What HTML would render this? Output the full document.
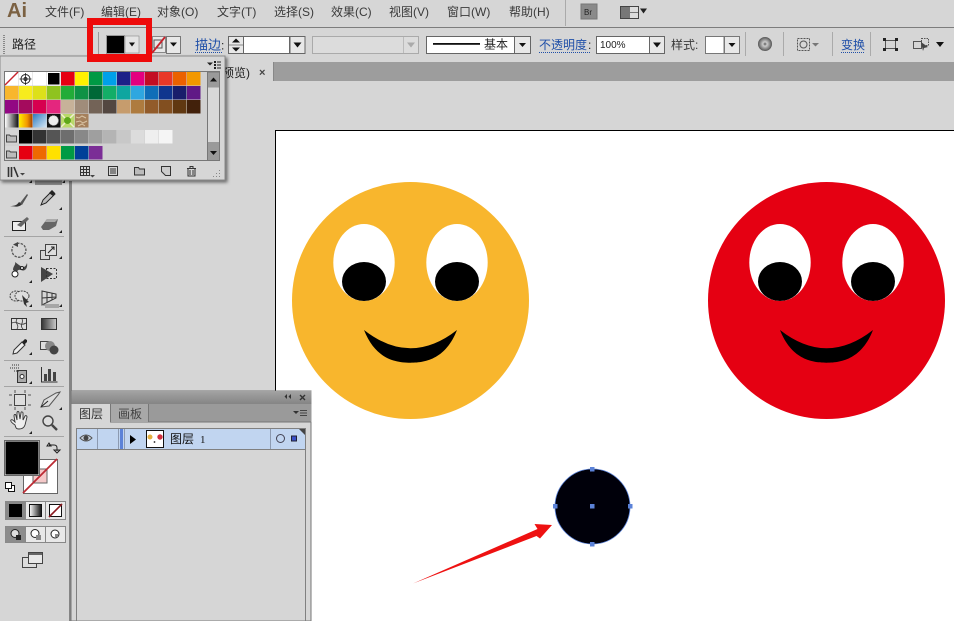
<!DOCTYPE html>
<html><head><meta charset="utf-8"><title>Illustrator</title>
<style>
html,body{margin:0;padding:0;background:#d6d6d6;width:954px;height:621px;overflow:hidden}
svg{display:block;filter:blur(.3px)}
text{font-family:"Liberation Sans","Noto Sans CJK SC",sans-serif;}
.m{font-size:12px;fill:#3a3a3a}
.b{font-size:12px;fill:#1f4fa8}
.k{font-size:12px;fill:#222}
.i{fill:none;stroke:#333;stroke-width:1.2}
.f{fill:#333}
</style></head><body>
<svg width="954" height="621" viewBox="0 0 954 621" xmlns="http://www.w3.org/2000/svg">
<defs>
<linearGradient id="g1" x1="0" x2="1" y1="0" y2="0"><stop offset="0" stop-color="#fff"/><stop offset="1" stop-color="#111"/></linearGradient>
<linearGradient id="g2" x1="0" x2="1" y1="0" y2="0"><stop offset="0" stop-color="#fff100"/><stop offset=".6" stop-color="#f39800"/><stop offset="1" stop-color="#a04000"/></linearGradient>
<linearGradient id="g3" x1="0" x2="1" y1="0" y2="1"><stop offset="0" stop-color="#2e7cc0"/><stop offset="1" stop-color="#d8e8f4"/></linearGradient>
<linearGradient id="g4" x1="0" x2="1" y1="0" y2="0"><stop offset="0" stop-color="#333"/><stop offset="1" stop-color="#ccc"/></linearGradient>
<linearGradient id="g5" x1="0" x2="0" y1="0" y2="1"><stop offset="0" stop-color="#a3a3a3"/><stop offset="1" stop-color="#858585"/></linearGradient>
<radialGradient id="g6"><stop offset="0" stop-color="#555"/><stop offset=".3" stop-color="#ccc"/><stop offset=".7" stop-color="#888"/><stop offset="1" stop-color="#555"/></radialGradient>
<filter id="sh" x="-5%" y="-5%" width="112%" height="115%"><feDropShadow dx="2" dy="2" stdDeviation="1.500" flood-color="#000" flood-opacity=".5"/></filter>
</defs>
<rect width="954" height="621" fill="#d6d6d6"/>

<!-- canvas -->
<rect x="275.500" y="130.500" width="690" height="500" fill="#fff" stroke="#000"/>

<!-- orange face -->
<circle cx="410.500" cy="300.500" r="118.500" fill="#f8b62d"/>
<ellipse cx="364" cy="262.500" rx="30.700" ry="38.500" fill="#fff"/>
<ellipse cx="457" cy="262.500" rx="30.700" ry="38.500" fill="#fff"/>
<ellipse cx="364" cy="281.500" rx="22" ry="19.500"/>
<ellipse cx="457" cy="281.500" rx="22" ry="19.500"/>
<path d="M364 330Q410.500 366.500 457 330C446 358 427 362.700 410.500 362.700C394 362.700 375 358 364 330Z"/>
<!-- red face -->
<circle cx="826.500" cy="300.500" r="118.500" fill="#e50012"/>
<ellipse cx="780" cy="262.500" rx="30.700" ry="38.500" fill="#fff"/>
<ellipse cx="873" cy="262.500" rx="30.700" ry="38.500" fill="#fff"/>
<ellipse cx="780" cy="281.500" rx="22" ry="19.500"/>
<ellipse cx="873" cy="281.500" rx="22" ry="19.500"/>
<path d="M780 330Q826.500 366.500 873 330C862 358 843 362.700 826.500 362.700C810 362.700 791 358 780 330Z"/>
<!-- selected circle -->
<circle cx="592.500" cy="506.500" r="37.500" fill="#00000a" stroke="#5b82d8" stroke-width=".8"/>
<g fill="#5b82d8"><rect x="590" y="504" width="4.500" height="4.500"/><rect x="590" y="467" width="4.500" height="4.500"/><rect x="590" y="542" width="4.500" height="4.500"/><rect x="553" y="504" width="4.500" height="4.500"/><rect x="628" y="504" width="4.500" height="4.500"/></g>
<!-- arrow -->
<path d="M413 583.500L537.500 529L534.500 524L552 525L540 538.500L536.500 536Z" fill="#ee1111"/>

<!-- tab strip -->
<rect x="226" y="62" width="728" height="19" fill="#9d9d9d"/>
<rect x="226" y="62" width="47" height="19" fill="#d6d6d6"/>
<line x1="273.500" y1="62" x2="273.500" y2="81" stroke="#888"/>
<text class="k" x="222" y="77" fill="#444">预览)</text>
<text x="259" y="76" style="font-size:11px;font-weight:bold;fill:#444">×</text>

<!-- menu -->
<rect x="0" y="0" width="954" height="27" fill="#d6d6d6"/>
<rect x="0" y="27" width="954" height="1" fill="#7d7d7d"/>
<text x="7" y="17" style="font-size:20px;font-weight:bold;fill:#7b6142">Ai</text>
<text class="m" x="45" y="16">文件(F)</text>
<text class="m" x="101" y="16">编辑(E)</text>
<text class="m" x="157" y="16">对象(O)</text>
<text class="m" x="217" y="16">文字(T)</text>
<text class="m" x="274" y="16">选择(S)</text>
<text class="m" x="331" y="16">效果(C)</text>
<text class="m" x="389" y="16">视图(V)</text>
<text class="m" x="447" y="16">窗口(W)</text>
<text class="m" x="509" y="16">帮助(H)</text>
<line x1="565.500" y1="0" x2="565.500" y2="26" stroke="#aaa"/>
<rect x="581" y="4" width="16" height="15" fill="#8a8a8a" stroke="#777"/>
<text x="584" y="15" style="font-size:8px;fill:#222">Br</text>
<rect x="620.500" y="6.500" width="18" height="12" fill="#777" stroke="#444"/>
<rect x="630" y="7" width="8" height="5" fill="#ddd"/><rect x="630" y="13" width="8" height="5" fill="#ddd"/>
<path d="M640 8.500h7l-3.500 5z" fill="#222"/>

<!-- control bar -->
<rect x="0" y="28" width="954" height="28" fill="#d6d6d6"/>
<line x1="4" y1="35" x2="4" y2="54" stroke="#888" stroke-dasharray="1 1" stroke-width="2"/>
<text class="k" x="12" y="48.500">路径</text>
<line x1="98.500" y1="32" x2="98.500" y2="54" stroke="#999"/>
<rect x="106.500" y="35.500" width="18" height="18" fill="#000" stroke="#fff"/><rect x="106.500" y="35.500" width="18" height="18" fill="none" stroke="#555" stroke-width=".6"/>
<rect x="125" y="36" width="14" height="17" fill="#e4e4e4" stroke="#888" stroke-width=".6"/>
<path d="M129 42.500h6l-3 4z" fill="#111"/>
<rect x="152.500" y="36.500" width="13" height="16" fill="#e8e8e8" stroke="#888"/>
<rect x="154" y="40" width="8" height="8" fill="none" stroke="#555"/>
<line x1="152" y1="53" x2="165" y2="37" stroke="#c8232c" stroke-width="1.800"/>
<rect x="166.500" y="36.500" width="14" height="17" fill="#e8e8e8" stroke="#777"/>
<path d="M170 42.500h7l-3.500 4z" fill="#111"/>
<text class="b" x="195" y="49.500" style="font-size:13px">描边</text><text class="k" x="221" y="49.500">:</text>
<line x1="195" y1="52.500" x2="222" y2="52.500" stroke="#1f4fa8" stroke-dasharray="1 1"/>
<rect x="228.500" y="36.500" width="15" height="17" fill="#e8e8e8" stroke="#666"/>
<line x1="229" y1="45" x2="243" y2="45" stroke="#888"/>
<path d="M232 42.500l4-4 4 4zM232 47.500h8l-4 4z" fill="#111"/>
<rect x="243.500" y="36.500" width="46" height="17" fill="#fff" stroke="#666"/>
<rect x="290" y="36.500" width="15" height="17" fill="#e8e8e8" stroke="#666"/>
<path d="M293.500 42.500h8l-4 5z" fill="#111"/>
<rect x="312.500" y="36.500" width="106" height="17" fill="#dcdcdc" stroke="#aaa"/>
<line x1="403.500" y1="37" x2="403.500" y2="53" stroke="#bbb"/>
<path d="M407 42.500h8l-4 5z" fill="#aaa"/>
<rect x="426.500" y="36.500" width="88" height="17" fill="#fff" stroke="#666"/>
<rect x="433" y="43" width="47" height="1.800" fill="#111"/>
<text class="k" x="484" y="48.500">基本</text>
<rect x="514.500" y="36.500" width="16" height="17" fill="#e8e8e8" stroke="#666"/>
<path d="M519 43h7l-3.500 4z" fill="#111"/>
<text class="b" x="539" y="49">不透明度</text><text class="k" x="588" y="49">:</text>
<line x1="539" y1="52.500" x2="590" y2="52.500" stroke="#1f4fa8" stroke-dasharray="1 1"/>
<rect x="596.500" y="36.500" width="53" height="17" fill="#fff" stroke="#666"/>
<text class="k" x="600" y="48" style="font-size:10px">100%</text>
<rect x="649.500" y="36.500" width="15" height="17" fill="#e8e8e8" stroke="#666"/>
<path d="M653 42.500h8l-4 5z" fill="#111"/>
<text class="m" x="671" y="49">样式:</text>
<rect x="705.500" y="36.500" width="18.500" height="17" fill="#fff" stroke="#777"/>
<rect x="724.500" y="36.500" width="15" height="17" fill="#e8e8e8" stroke="#777"/>
<path d="M728.500 43h7l-3.500 4z" fill="#111"/>
<line x1="745.500" y1="32" x2="745.500" y2="56" stroke="#aaa"/>
<circle cx="765" cy="44" r="7" fill="url(#g6)"/>
<line x1="783.500" y1="32" x2="783.500" y2="56" stroke="#aaa"/>
<rect x="797.500" y="38.500" width="12" height="12" fill="none" stroke="#555" stroke-dasharray="2 1"/><circle cx="803.500" cy="44.500" r="3.500" fill="none" stroke="#555"/>
<path d="M812 43h7l-3.500 3.500z" fill="#777"/>
<line x1="832.500" y1="32" x2="832.500" y2="56" stroke="#aaa"/>
<text class="b" x="841" y="49">变换</text>
<line x1="841" y1="52.500" x2="865" y2="52.500" stroke="#1f4fa8" stroke-dasharray="1 1"/>
<line x1="870.500" y1="32" x2="870.500" y2="56" stroke="#aaa"/>
<rect x="885.500" y="40.500" width="10" height="8" fill="none" stroke="#555"/>
<g fill="#222"><rect x="883" y="38" width="3" height="3"/><rect x="895" y="38" width="3" height="3"/><rect x="883" y="48" width="3" height="3"/><rect x="895" y="48" width="3" height="3"/></g>
<rect x="913.500" y="41.500" width="8" height="7" fill="none" stroke="#555"/>
<rect x="921.500" y="38.500" width="7" height="7" fill="none" stroke="#555" stroke-dasharray="1.500 1"/>
<path d="M921 42l7 5-4 1-1 3z" fill="#444"/>
<path d="M936 42h8l-4 5z" fill="#111"/>

<!-- tools panel -->
<rect x="69" y="181" width="3" height="440" fill="#858585"/>
<g class="tools">
<rect x="35" y="175" width="27" height="10" fill="#8a8a8a"/>
<path d="M29 183l3 0 0-3zM62 183l3 0 0-3z" fill="#222"/>
<!-- brush -->
<path d="M10 206c5 0 7-1 9-4l3 2c-2 3-6 3-12 2z" fill="#333"/><path d="M20 203l7-9 1 1-6 10z" fill="#555"/>
<path d="M41 205l2-5 9-9 3 3-9 9z" fill="#bbb" stroke="#222"/><path d="M49 193l3-3 3 3-2 3z" fill="#222"/>
<path d="M59 210h3v-3z" fill="#222"/>
<rect x="12.500" y="221.500" width="13" height="9" fill="#eee" stroke="#222"/><path d="M17 225l10-8 2 2-8 8z" fill="#666"/>
<path d="M41 227l6-8h11l-2 7-7 4h-6z" fill="#666"/><path d="M47 219h11l-3 3h-10z" fill="#aaa"/>
<path d="M59 233h3v-3z" fill="#222"/>
<line x1="4" y1="236.500" x2="64" y2="236.500" stroke="#a5a5a5"/>
<!-- rotate -->
<path d="M17 243.500a7 7 0 1 1-4 3" fill="none" stroke="#555" stroke-width="1.300" stroke-dasharray="2.500 1.200"/><path d="M13 244.500l5-2.500v5z" fill="#444"/>
<path d="M29 259h3v-3z" fill="#222"/>
<rect x="40.500" y="250.500" width="9" height="9" fill="none" stroke="#444"/><rect x="45.500" y="244.500" width="11" height="11" fill="#ddd" stroke="#444"/><path d="M48 253l6-6M51 247h3v3" stroke="#222" fill="none"/>
<path d="M59 259h3v-3z" fill="#222"/>
<path d="M13 270c0-4 3-5 2-8l4 3c3 2 6 4 8-2 1 5-2 9-6 7-3-1-4 1-4 3z" fill="#444"/><circle cx="15" cy="274" r="3" fill="#fff" stroke="#222"/><circle cx="22" cy="268" r="1.500" fill="#fff" stroke="#222"/>
<path d="M29 283h3v-3z" fill="#222"/>
<path d="M41 267l12 7-12 8z" fill="#444"/><rect x="46.500" y="268.500" width="10" height="10" fill="none" stroke="#333" stroke-dasharray="2 1.500"/>
<!-- shape builder / perspective -->
<ellipse cx="16" cy="296" rx="6" ry="5" fill="none" stroke="#444" stroke-dasharray="2 1"/><ellipse cx="22" cy="296" rx="7" ry="5" fill="#ddd" stroke="#444" stroke-dasharray="2 1"/><path d="M22 295l7 7-3 1 1 4-3-3z" fill="#333"/>
<path d="M29 307h3v-3z" fill="#222"/>
<path d="M42 291l14 3v4l-14 7zM47 292v11M52 293v7M42 298l14-1" fill="none" stroke="#333"/><path d="M42 305h17M45 307h14" stroke="#777"/>
<path d="M59 307h3v-3z" fill="#222"/>
<line x1="4" y1="310.500" x2="64" y2="310.500" stroke="#a5a5a5"/>
<!-- mesh/gradient -->
<rect x="11.500" y="318.500" width="15" height="11" fill="#ddd" stroke="#333"/><path d="M12 323c5-3 8 4 14 0M17 319c-3 4 3 6 0 10M22 319c2 4-3 6 1 10" fill="none" stroke="#333" stroke-width=".8"/>
<rect x="41.500" y="318.500" width="15" height="11" fill="url(#g4)" stroke="#333"/>
<path d="M13 354l1-4 8-8 3 3-8 8z" fill="#eee" stroke="#333"/><path d="M22 342l3-3 2 1 0 2-3 3z" fill="#222"/>
<path d="M29 355h3v-3z" fill="#222"/>
<rect x="40.500" y="341.500" width="8" height="8" fill="#ddd" stroke="#444"/><circle cx="50" cy="346" r="5" fill="#888"/><circle cx="54" cy="350" r="4.500" fill="#444"/>
<line x1="4" y1="360.500" x2="64" y2="360.500" stroke="#a5a5a5"/>
<!-- symbol / graph -->
<rect x="17.500" y="370.500" width="9" height="12" fill="#aaa" stroke="#333"/><circle cx="22" cy="376.500" r="2" fill="#fff" stroke="#333"/>
<path d="M10 368h9M12 365h7M19 371h-6" stroke="#333" stroke-dasharray="1 1" fill="none"/>
<path d="M29 384h3v-3z" fill="#222"/>
<path d="M41.500 367v15h16" fill="none" stroke="#333"/><rect x="44" y="374" width="3" height="7" fill="#444"/><rect x="48" y="369" width="3" height="12" fill="#444"/><rect x="53" y="372" width="3" height="9" fill="#444"/>
<line x1="4" y1="386.500" x2="64" y2="386.500" stroke="#a5a5a5"/>
<!-- artboard -->
<rect x="14.500" y="394.500" width="11" height="11" fill="#ddd" stroke="#444"/><path d="M9 395h3M28 395h3M9 405h3M28 405h3M15 390v3M25 390v3M15 407v3M25 407v3" stroke="#555"/>
<path d="M41 407l3-7 12-7 4-1-2 3-9 11z" fill="#ddd" stroke="#555"/><path d="M41 407l7-6" stroke="#222"/>
<path d="M59 410h3v-3z" fill="#222"/>
<path d="M15 425c-3-2-5-4-4-5s3 1 4 2l-1-6c0-2 2-2 2 0l1 4 0-7c0-2 2-2 2 0l1 6 1-6c0-2 2-1 2 0l0 7 2-4c1-1 2 0 2 1l-2 8c-1 3-3 4-6 4s-3-1-4-4z" fill="#eee" stroke="#333" stroke-width=".9"/>
<path d="M29 434h3v-3z" fill="#222"/>
<circle cx="48" cy="421" r="5" fill="#ddd" stroke="#444" stroke-width="1.400"/><path d="M52 425l5 5" stroke="#444" stroke-width="2.400"/>
<line x1="4" y1="436.500" x2="64" y2="436.500" stroke="#a5a5a5"/>
<!-- fill/stroke -->
<rect x="23.500" y="459.500" width="34" height="34" fill="#fff" stroke="#666"/>
<rect x="33" y="469" width="14" height="14" fill="#f5c9c9" stroke="#666"/>
<line x1="23" y1="493" x2="57" y2="459" stroke="#bb2a33" stroke-width="1.800"/>
<rect x="5" y="441" width="34" height="34" fill="#000" stroke="#f4f4f4" stroke-width="1"/>
<rect x="4.500" y="440.500" width="35" height="35" fill="none" stroke="#666"/>
<path d="M49 443l-2 3 4 0zM60 450l-3 3-3-3zM49 445h5q3 0 3 3v3" fill="none" stroke="#222" stroke-width="1"/>
<rect x="8.500" y="485.500" width="6" height="6" fill="#fff" stroke="#111"/><rect x="5.500" y="482.500" width="6" height="6" fill="#fff" stroke="#111"/>
<!-- mode buttons -->
<rect x="5.500" y="501.500" width="60" height="18" fill="#e8e8e8" stroke="#888"/>
<rect x="5.500" y="501.500" width="20" height="18" fill="#888"/>
<rect x="9" y="504" width="13" height="13" fill="#000"/>
<rect x="29.500" y="504.500" width="12" height="12" fill="url(#g1)" stroke="#111"/>
<rect x="49.500" y="504.500" width="12" height="12" fill="#fff" stroke="#111"/><line x1="49" y1="517" x2="62" y2="504" stroke="#8a1a20" stroke-width="1.600"/>
<line x1="25.500" y1="502" x2="25.500" y2="519" stroke="#888"/><line x1="45.500" y1="502" x2="45.500" y2="519" stroke="#888"/>
<rect x="5.500" y="526.500" width="60" height="16" fill="#e8e8e8" stroke="#888"/>
<rect x="5.500" y="526.500" width="20" height="16" fill="#8c8c8c"/>
<circle cx="15" cy="533.500" r="4" fill="#ddd" stroke="#222"/><rect x="16" y="535" width="5" height="5" fill="#222"/>
<circle cx="35" cy="533.500" r="4" fill="#fff" stroke="#222"/><rect x="36" y="535" width="5" height="5" fill="#888"/>
<circle cx="55" cy="534" r="4" fill="#fff" stroke="#222"/><rect x="55" y="534" width="3" height="3" fill="#888"/>
<line x1="25.500" y1="527" x2="25.500" y2="542" stroke="#888"/><line x1="45.500" y1="527" x2="45.500" y2="542" stroke="#888"/>
<rect x="22.500" y="557.500" width="14" height="10" fill="#ddd" stroke="#444"/>
<rect x="28.500" y="552.500" width="14" height="11" fill="#e8e8e8" stroke="#444"/><rect x="29" y="553" width="13" height="2" fill="#666"/>
</g>

<!-- layers panel -->
<rect x="71" y="391" width="240" height="230" fill="#d6d6d6" stroke="#777"/>
<rect x="71.500" y="391" width="240" height="13" fill="url(#g5)"/>
<rect x="71.500" y="404" width="240" height="18" fill="#9a9a9a"/>
<line x1="71" y1="422" x2="311" y2="422" stroke="#777"/>
<rect x="71.500" y="404" width="38.500" height="19" fill="#d6d6d6"/>
<line x1="110.500" y1="404" x2="110.500" y2="422" stroke="#777"/>
<rect x="111" y="404" width="37" height="18" fill="#a8a8a8"/>
<line x1="148.500" y1="404" x2="148.500" y2="422" stroke="#777"/>
<text x="79" y="418" style="font-size:12px;fill:#333">图层</text>
<text x="118" y="418" style="font-size:12px;fill:#444">画板</text>
<path d="M287 397v-3l-2.500 2.500 2.500 2.500zM291 397v-3l-2.500 2.500 2.500 2.500z" fill="#333"/>
<path d="M300 395l5 5m0-5l-5 5" stroke="#333" stroke-width="1.400"/>
<path d="M293 411h6l-3 3z" fill="#333"/><path d="M300 410.500h7M300 413h7M300 415.500h7" stroke="#444"/>
<rect x="76.500" y="428.500" width="229" height="192.500" fill="#d6d6d6" stroke="#808080"/>
<rect x="77" y="429" width="228" height="20" fill="#c1d5f0"/>
<line x1="77" y1="449.500" x2="305" y2="449.500" stroke="#808080"/>
<line x1="97.500" y1="429" x2="97.500" y2="449" stroke="#8c9ab0"/>
<line x1="118.500" y1="429" x2="118.500" y2="449" stroke="#8c9ab0"/>
<rect x="120" y="429" width="3" height="20" fill="#5b82d8"/>
<line x1="124.500" y1="429" x2="124.500" y2="449" stroke="#8c9ab0"/>
<line x1="270.500" y1="429" x2="270.500" y2="449" stroke="#8c9ab0"/>
<path d="M80 438q6-6 12 0q-6 6-12 0z" fill="#c8d0dc" stroke="#555"/><circle cx="86" cy="438" r="2.500" fill="#444"/>
<path d="M130 435l6 4.500-6 4.500z" fill="#000"/>
<rect x="146.500" y="430.500" width="17" height="17" fill="#fff" stroke="#111"/>
<circle cx="150" cy="437" r="2.500" fill="#e4b040"/><circle cx="160" cy="437" r="2.700" fill="#d03040"/><circle cx="154.500" cy="442" r=".9" fill="#222"/>
<text x="170" y="443" style="font-size:12px;fill:#111">图层</text>
<text x="200" y="443" style="font-size:11px;fill:#111;font-family:'Liberation Serif',serif">1</text>
<circle cx="280.500" cy="438.500" r="4" fill="none" stroke="#445"/>
<rect x="291.500" y="436" width="5" height="5" fill="#3a50c8" stroke="#223"/>
<path d="M299 429h6v6z" fill="#444"/>

<!-- swatches panel -->
<g filter="url(#sh)"><rect x="0" y="56" width="225" height="124" fill="#d6d6d6" stroke="#8a8a8a"/></g>
<path d="M207 62.500h6l-3 3z" fill="#222"/>
<path d="M214 61h2v2h-2zM214 64h2v2h-2zM214 67h2v2h-2z" fill="#222"/><path d="M217 62h4M217 65h4M217 68h4" stroke="#222"/>
<rect x="4.500" y="71.500" width="215" height="89" fill="#d0d0d0" stroke="#777"/>

<g id="sw">
<!-- row 1 -->
<rect x="5" y="72" width="13.500" height="13.500" fill="#fff"/><line x1="5" y1="85" x2="18" y2="72" stroke="#c8232c" stroke-width="1.400"/>
<rect x="19" y="72" width="13.500" height="13.500" fill="#fff"/><circle cx="25.500" cy="79" r="4.500" fill="none" stroke="#222"/><circle cx="25.500" cy="79" r="1.500" fill="none" stroke="#222"/><path d="M25.500 73v12M19.500 79h12" stroke="#222" stroke-width=".8"/>
<rect x="33" y="72" width="13.500" height="13.500" fill="#fff"/>
<rect x="47" y="72" width="13.500" height="13.500" fill="#fff"/><rect x="48" y="73" width="11.500" height="11.500" fill="#000"/>
<rect x="61" y="72" width="13.500" height="13.500" fill="#e60012"/><rect x="75" y="72" width="13.500" height="13.500" fill="#fff100"/><rect x="89" y="72" width="13.500" height="13.500" fill="#009944"/><rect x="103" y="72" width="13.500" height="13.500" fill="#00a0e9"/><rect x="117" y="72" width="13.500" height="13.500" fill="#1d2088"/><rect x="131" y="72" width="13.500" height="13.500" fill="#e4007f"/><rect x="145" y="72" width="13.500" height="13.500" fill="#c30d23"/><rect x="159" y="72" width="13.500" height="13.500" fill="#e83828"/><rect x="173" y="72" width="13.500" height="13.500" fill="#eb6100"/><rect x="187" y="72" width="13.500" height="13.500" fill="#f39800"/>
<!-- row 2 -->
<rect x="5" y="86" width="13.500" height="13.500" fill="#f8b62d"/><rect x="19" y="86" width="13.500" height="13.500" fill="#f7ec1e"/><rect x="33" y="86" width="13.500" height="13.500" fill="#dde01a"/><rect x="47" y="86" width="13.500" height="13.500" fill="#8fc31f"/><rect x="61" y="86" width="13.500" height="13.500" fill="#22ac38"/><rect x="75" y="86" width="13.500" height="13.500" fill="#0f9245"/><rect x="89" y="86" width="13.500" height="13.500" fill="#006837"/><rect x="103" y="86" width="13.500" height="13.500" fill="#13ae67"/><rect x="117" y="86" width="13.500" height="13.500" fill="#0ea6a0"/><rect x="131" y="86" width="13.500" height="13.500" fill="#2ea7e0"/><rect x="145" y="86" width="13.500" height="13.500" fill="#0f6eb8"/><rect x="159" y="86" width="13.500" height="13.500" fill="#10358e"/><rect x="173" y="86" width="13.500" height="13.500" fill="#191e6b"/><rect x="187" y="86" width="13.500" height="13.500" fill="#601986"/>
<!-- row 3 -->
<rect x="5" y="100" width="13.500" height="13.500" fill="#920783"/><rect x="19" y="100" width="13.500" height="13.500" fill="#a40b5d"/><rect x="33" y="100" width="13.500" height="13.500" fill="#d7004f"/><rect x="47" y="100" width="13.500" height="13.500" fill="#e4267e"/><rect x="61" y="100" width="13.500" height="13.500" fill="#c7b299"/><rect x="75" y="100" width="13.500" height="13.500" fill="#a08c7a"/><rect x="89" y="100" width="13.500" height="13.500" fill="#736357"/><rect x="103" y="100" width="13.500" height="13.500" fill="#534741"/><rect x="117" y="100" width="13.500" height="13.500" fill="#c69c6d"/><rect x="131" y="100" width="13.500" height="13.500" fill="#ae7b3f"/><rect x="145" y="100" width="13.500" height="13.500" fill="#925b2a"/><rect x="159" y="100" width="13.500" height="13.500" fill="#824f20"/><rect x="173" y="100" width="13.500" height="13.500" fill="#603811"/><rect x="187" y="100" width="13.500" height="13.500" fill="#42210b"/>
<!-- row 4 -->
<rect x="5" y="114" width="13.500" height="13.500" fill="url(#g1)"/><rect x="19" y="114" width="13.500" height="13.500" fill="url(#g2)"/><rect x="33" y="114" width="13.500" height="13.500" fill="url(#g3)"/>
<rect x="47" y="114" width="13.500" height="13.500" fill="#111"/><circle cx="53.500" cy="120.500" r="5" fill="#eee"/><circle cx="53.500" cy="120.500" r="5" fill="none" stroke="#888" stroke-dasharray="1 1"/>
<rect x="61" y="114" width="13.500" height="13.500" fill="#b9d96a"/><circle cx="67.500" cy="120.500" r="3.500" fill="#5ea81a"/><path d="M61 114l4 4M74 114l-4 4M61 127l4-4M74 127l-4-4" stroke="#f0f0d0" stroke-width="1.500"/>
<rect x="75" y="114" width="13.500" height="13.500" fill="#a5805c"/><path d="M76 117l3 1 3-2 4 2M76 122l4-1 3 2 4-2M78 126l4-2 3 2" stroke="#d9c3a4" fill="none"/>
<!-- grays -->
<rect x="5" y="130" width="13.500" height="13.500" fill="#d6d6d6"/><path d="M6.500 135v7h10v-6h-6l-1-1z" fill="#bbb" stroke="#444"/>
<rect x="19" y="130" width="13.500" height="13.500" fill="#000"/><rect x="33" y="130" width="13.500" height="13.500" fill="#333"/><rect x="47" y="130" width="13.500" height="13.500" fill="#555"/><rect x="61" y="130" width="13.500" height="13.500" fill="#6e6e6e"/><rect x="75" y="130" width="13.500" height="13.500" fill="#888"/><rect x="89" y="130" width="13.500" height="13.500" fill="#9f9f9f"/><rect x="103" y="130" width="13.500" height="13.500" fill="#b4b4b4"/><rect x="117" y="130" width="13.500" height="13.500" fill="#c8c8c8"/><rect x="131" y="130" width="13.500" height="13.500" fill="#dcdcdc"/><rect x="145" y="130" width="13.500" height="13.500" fill="#efefef"/><rect x="159" y="130" width="13.500" height="13.500" fill="#f5f5f5"/>
<!-- last -->
<rect x="5" y="146" width="13.500" height="13.500" fill="#d6d6d6"/><path d="M6.500 151v7h10v-6h-6l-1-1z" fill="#bbb" stroke="#444"/>
<rect x="19" y="146" width="13.500" height="13.500" fill="#e60012"/><rect x="33" y="146" width="13.500" height="13.500" fill="#ee6a00"/><rect x="47" y="146" width="13.500" height="13.500" fill="#ffe100"/><rect x="61" y="146" width="13.500" height="13.500" fill="#009a44"/><rect x="75" y="146" width="13.500" height="13.500" fill="#004098"/><rect x="89" y="146" width="13.500" height="13.500" fill="#7b2d96"/>
</g>
<!-- scrollbar -->
<rect x="207.500" y="72" width="12" height="88" fill="#d8d8d8" stroke="#777"/>
<rect x="208" y="72.500" width="11" height="15" fill="#9a9a9a"/>
<rect x="208" y="142" width="11" height="18" fill="#9a9a9a"/>
<path d="M210 81.500l3.500-4 3.500 4z" fill="#111"/>
<path d="M210 151h7l-3.500 4z" fill="#111"/>
<!-- bottom icons -->
<path d="M8.500 167v10M11.500 167v10M14 167l4 10" stroke="#333" stroke-width="1.600" fill="none"/><path d="M20 173h5l-2.500 2.500z" fill="#444"/>
<rect x="80.500" y="166.500" width="9" height="9" fill="none" stroke="#333"/><path d="M83.500 167v8M86.500 167v8M81 169.500h8M81 172.500h8" stroke="#333"/>
<path d="M90 175h5l-2.500 2.500z" fill="#444"/>
<rect x="108.500" y="166.500" width="9" height="9" fill="none" stroke="#333"/><path d="M110 169h6M110 171h6M110 173h6" stroke="#333"/>
<path d="M134.500 167.500h4l1 1.500h5v6h-10z" fill="#bbb" stroke="#333"/>
<path d="M161.500 166.500h9v9h-5l-4-4z" fill="#ccc" stroke="#333"/>
<path d="M187 168.500h9M188 169v7h7v-7M190 168v-1.500h3v1.500M190 170v5M193 170v5" fill="none" stroke="#333"/>
<path d="M213 177h1v-1h-1zM216 177h1v-1h-1zM219 177h1v-1h-1zM216 174h1v-1h-1zM219 174h1v-1h-1zM219 171h1v-1h-1z" fill="#888"/>

<!-- red highlight rectangle -->
<path fill-rule="evenodd" d="M87 18h65v44H87zM93 25v29h53V25z" fill="#ee0b0b"/>
</svg>
</body></html>
